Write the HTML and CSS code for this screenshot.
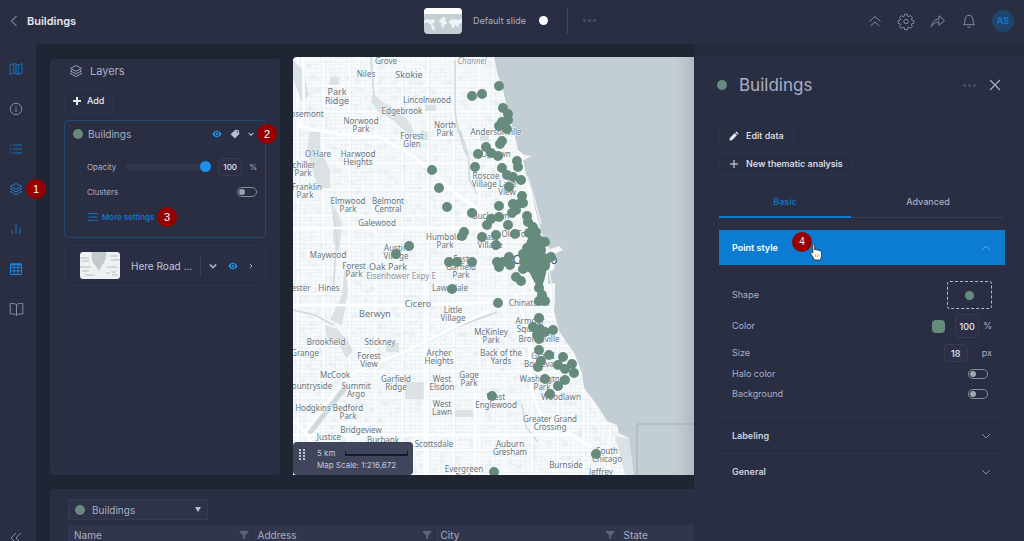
FILE: index.html
```html
<!DOCTYPE html>
<html lang="en">
<head>
<meta charset="utf-8">
<meta name="viewport" content="width=device-width, initial-scale=1">
<title>Buildings</title>
<link rel="stylesheet" href="styles.css">
</head>
<body>
<svg class="defs" width="0" height="0" aria-hidden="true">
  <symbol id="eye" viewBox="0 0 12 10"><path fill="currentColor" fill-rule="evenodd" d="M6 1C3.300 1 1.300 2.700.4 5 1.300 7.300 3.300 9 6 9s4.700-1.700 5.600-4C10.700 2.700 8.700 1 6 1zm0 1.300a2.700 2.700 0 1 1 0 5.400 2.700 2.700 0 0 1 0-5.400z"/><circle cx="6" cy="5" r="1.500" fill="currentColor"/></symbol>
  <symbol id="layers" viewBox="0 0 16 16"><path d="M8 1.700 14.200 5 8 8.300 1.800 5zM3.200 7.300 1.800 8 8 11.300 14.200 8l-1.400-.7M3.200 10.300 1.800 11 8 14.300l6.200-3.300-1.400-.7"/></symbol>
  <symbol id="filter" viewBox="0 0 10 10"><path fill="currentColor" d="M.8 1h8.400v1.200L6 5.400V9H4.200V5.400L.8 2.200z"/></symbol>
  <symbol id="chevron" viewBox="0 0 10 6"><path d="m1 1 4 4 4-4"/></symbol>
</svg>

<header class="topbar">
  <div class="topbar-left">
    <button class="icon-btn" aria-label="Back"><svg class="line" width="8" height="12" viewBox="0 0 8 12"><path d="M6.500 1 1.500 6l5 5"/></svg></button>
    <h1>Buildings</h1>
  </div>
  <div class="slides">
    <svg class="slide-thumb" viewBox="0 0 38 26" aria-hidden="true">
      <rect width="38" height="26" fill="#c3cfd3"/><rect width="38" height="6" fill="#fff"/>
      <g fill="#eef4f5"><path d="M0 13l3-2 4 1 3-1 1 3-3 2 3 3-1 4-2-2-1-4-4-3-3 1zM16 12l3-3 3 1-1 3 2 1-1 3-2-1v4l-2-1-1-4-2-1zM25 13l4-2 5 1 4-1v4l-3 1-1 4-2-3-2 1v3l-2-2-1-3-2-1z"/></g>
    </svg>
    <span class="slide-name">Default slide</span>
    <span class="slide-dot"></span>
    <button class="dots-btn slide-more" aria-label="More slides"><i></i><i></i><i></i></button>
  </div>
  <div class="topbar-right">
    <button class="icon-btn" aria-label="Collapse"><svg class="line" width="14" height="14" viewBox="0 0 14 14"><path d="m1.500 7.500 5.500-5 5.500 5M2.500 12 7 8l4.500 4"/></svg></button>
    <button class="icon-btn" aria-label="Settings"><svg class="line" width="16" height="16" viewBox="0 0 16 16"><path d="M6.700 1.200h2.600l.4 1.900 1.200.5 1.700-1 1.800 1.800-1 1.700.5 1.100 1.900.5v2.600l-1.900.4-.5 1.200 1 1.600-1.800 1.900-1.700-1.100-1.200.5-.4 2H6.700l-.4-2-1.200-.5-1.700 1.100-1.800-1.900 1-1.600-.5-1.200-1.900-.4V7.700l1.900-.5.500-1.100-1-1.700 1.800-1.800 1.700 1 1.200-.5z"/><circle cx="8" cy="8.500" r="2.200"/></svg></button>
    <button class="icon-btn" aria-label="Share"><svg class="line" width="16" height="14" viewBox="0 0 16 14"><path d="M1.500 12.500C2 8 4.500 5.200 9 5.200V1.700l5.500 5L9 11.200V8C5.500 8 3.300 9.300 1.500 12.500z"/></svg></button>
    <button class="icon-btn" aria-label="Notifications"><svg class="line" width="14" height="16" viewBox="0 0 14 16"><path d="M1.500 11.700h11c-1.200-1.200-1.500-2.200-1.500-4.700C11 4 9.300 2.300 7 2.300S3 4 3 7c0 2.500-.3 3.500-1.500 4.700zM5.500 14.300h3"/></svg></button>
    <button class="avatar">AS</button>
  </div>
</header>

<div class="workspace">
  <nav class="rail" aria-label="Sections">
    <div class="rail-items">
      <a href="#map" class="on" aria-label="Map"><svg width="14" height="14" viewBox="0 0 14 14"><path d="m1 3 3.700-1.500 4.600 1.500L13 1.500V11l-3.700 1.500L4.700 11 1 12.500zM4.700 1.500V11M9.300 3v9.500M7 2.300v9.500"/></svg></a>
      <a href="#info" aria-label="Info"><svg width="14" height="14" viewBox="0 0 14 14"><circle cx="7" cy="7" r="5.700"/><path d="M7 6.200v4M7 3.800v1"/></svg></a>
      <a href="#legend" class="on" aria-label="Legend"><svg width="14" height="14" viewBox="0 0 14 14"><path d="M4 3h9M4 7h9M4 11h9M1 3h1.300M1 7h1.300M1 11h1.300"/></svg></a>
      <a href="#layers" class="on bright" aria-label="Layers"><svg width="14" height="14"><use href="#layers"/></svg><b class="step step-1">1</b></a>
      <a href="#charts" class="on" aria-label="Charts"><svg width="14" height="14" viewBox="0 0 14 14"><path d="M3 12V8M7 12V2M11 12V6"/></svg></a>
      <a href="#table" class="on bright" aria-label="Table"><svg width="14" height="14" viewBox="0 0 14 14"><path d="M1.500 2h11v10.500h-11zM1.500 5.500h11M1.500 9h11M5 3v9.500M9 3v9.500"/><path d="M1.500 2.500h11" stroke-width="2"/></svg></a>
      <a href="#docs" aria-label="Docs"><svg width="15" height="14" viewBox="0 0 15 14"><path d="M7.500 2.700C6 1.500 3.500 1.200 1.200 1.500V12c2.300-.3 4.800 0 6.300 1.200 1.500-1.200 4-1.500 6.300-1.200V1.500c-2.300-.3-4.800 0-6.300 1.200zv10.500"/></svg></a>
    </div>
    <button class="icon-btn rail-fold" aria-label="Fold"><svg class="line" width="12" height="12" viewBox="0 0 12 12"><path d="M6 1 1 6l5 5M11 1 6 6l5 5"/></svg></button>
  </nav>

  <main class="stage">
    <div class="upper">
      <section class="layers">
        <h2><svg class="line" width="14" height="14"><use href="#layers"/></svg>Layers</h2>
        <button class="outline-btn"><svg class="line strong" width="8" height="8" viewBox="0 0 8 8"><path d="M4 0v8M0 4h8"/></svg>Add</button>
        <article class="card active">
          <div class="card-head">
            <span class="dot"></span><h3>Buildings</h3>
            <button class="icon-btn blue" aria-label="Visibility"><svg width="10" height="8"><use href="#eye"/></svg></button>
            <button class="icon-btn" aria-label="Label"><svg width="10" height="10" viewBox="0 0 10 10"><path fill="#b9bfd4" d="M5.300.8 9 1.200 9.300 5 4.800 9.400.7 5.300z"/><circle cx="7.300" cy="2.800" r=".7" fill="#2a2e42"/></svg></button>
            <button class="icon-btn" aria-label="Collapse layer"><svg class="line strong" width="6" height="4"><use href="#chevron"/></svg></button>
            <b class="step step-2">2</b>
          </div>
          <div class="field">
            <label for="opacity">Opacity</label>
            <input type="range" id="opacity" value="100">
            <input type="text" class="num" value="100" aria-label="Opacity percent"><span class="unit">%</span>
          </div>
          <div class="field split"><label for="clusters">Clusters</label><input type="checkbox" class="switch" id="clusters"></div>
          <a href="#settings" class="more"><svg width="10" height="10" viewBox="0 0 10 10"><path d="M0 1.500h10M0 5h10M0 8.500h10M3 .5v2M7 4v2M3 7.500v2"/></svg>More settings<b class="step step-3">3</b></a>
        </article>
        <article class="card base">
          <svg class="base-thumb" viewBox="0 0 40 27" aria-hidden="true"><rect width="40" height="27" fill="#eef1f1"/><path fill="#c3cacd" d="M12 0h14c1 6-1 10-4 13l-3 6-4-6c-3-3-4-7-3-13z"/><path d="M0 6h9M1 9h8M0 15h11M2 19h7M5 23h10M30 4h8M31 8h9M27 15h10M26 21h4M32 23h6M31 20h5" stroke="#aab3b6" stroke-width=".8"/></svg>
          <h3>Here Road ...</h3>
          <button class="icon-btn divided" aria-label="Options"><svg class="line strong" width="8" height="6"><use href="#chevron"/></svg></button>
          <button class="icon-btn blue" aria-label="Visibility"><svg width="10" height="8"><use href="#eye"/></svg></button>
          <button class="icon-btn" aria-label="Open"><svg class="line" width="4" height="6" viewBox="0 0 4 6"><path d="m.8.800 2.200 2.200L.8 5.200"/></svg></button>
        </article>
      </section>

      <section class="map" aria-label="Map">
        <svg class="map-canvas" viewBox="293 57 401 418" preserveAspectRatio="xMinYMin slice">
          <defs>
            <pattern id="blocks" width="5" height="4" patternUnits="userSpaceOnUse"><path d="M0 .5h5M.5 0v4" stroke="#ebf0f3" stroke-width=".6"/></pattern>
            <pattern id="avenues" width="26" height="26" patternUnits="userSpaceOnUse"><path d="M0 8h26M12 0v26" stroke="#fff" stroke-width="1.500"/><path d="M0 9.300h26M13.300 0v26" stroke="#e6ecef" stroke-width=".6"/></pattern>
            <filter id="speckle" x="0" y="0" width="1" height="1"><feTurbulence type="fractalNoise" baseFrequency=".13 .16" numOctaves="3" seed="8"/><feColorMatrix values="0 0 0 0 .77  0 0 0 0 .82  0 0 0 0 .84  3.600 0 0 0 -2"/></filter>
            <linearGradient id="shade"><stop offset="0" stop-color="#8e979d" stop-opacity="0"/><stop offset="1" stop-color="#8e979d" stop-opacity=".35"/></linearGradient>
          </defs>
          <rect x="293" y="57" width="401" height="418" fill="#f6fafc"/>
          <rect x="293" y="57" width="401" height="418" fill="url(#blocks)"/>
          <rect x="293" y="57" width="401" height="418" filter="url(#speckle)" opacity=".9"/>
          <rect x="293" y="57" width="401" height="418" fill="url(#avenues)"/>
          <g fill="#dae2e5">
            <path d="M309 132h11v17l10 21v18h-12l-5-16-6-22zM373 93l8 8 12 8 14 10 7 12-4 5-16-15-16-10-7-9zM405 382h19v17h-19zM325 325l12 4 11 12 5 10-7 7-6-12-13-8zM345 262l3 28-6 35-12-5 12-25zM334 205l8 18-3 30-6-12zM425 105h11v6h-11zM421 130l7 2v8h-8zM480 134h9v7h-9zM386 343h13v9h-13zM455 410h18v7h-18zM615 436l17 3 5 36h-12zM330 77h9v8h-9zM293 60l10 10 6 25-7 8-9-25z"/>
          </g>
          <g fill="none" stroke="#cfd8dc" stroke-width="1.500">
            <path d="M455 60v50l2 15 7 24 5 10v20l8 15M293 310l22 5 18 10M332 205l5 35-4 50M460 130l8 25M371 57l3 40M522 405l4 22 12 15"/>
            <path d="M348 376l49-20 60-29 40-15"/>
            <path d="M309 434l39-50" stroke-width="5"/>
          </g>
          <g fill="none" stroke="#fff" stroke-width="2.500">
            <path d="M303 57l1 50-4 20 40 7 40 3 35 20 45 40 45 30 35 20M293 228h225M293 305h120l100-3M305 432l42-56 53-22 90-44M293 420l15 15 15 40M425 260v215M516 295l13 40 2 55 10 25 50 32M548 275l6 30 12 28 14 35M505 110l18 50 15 65M293 435h280M475 380v95"/>
          </g>
          <path fill="#c3cdd4" d="M694 57H494l3 15 6 18 5 22 6 21 4 17 6 5 8 1-9 4 3 15 5 15 3 15 5 18 4 15 7 11 9-3 4 4-7 3-2 17-6 2v12l7-1v15l-1 13 5 20 15 22 8 20 2 15 13 17 10 16 10 4 2 8 10 5 5 37h60z"/>
          <path d="M541 224l-9-33-5-15M549 270l4 24v13" fill="none" stroke="#edf2f4" stroke-width="1.500"/>
          <path d="M694 424h-57v51" fill="none" stroke="#a5afb6"/>
          <rect x="676" y="57" width="18" height="418" fill="url(#shade)"/>
          <g class="place">
            <text x="386" y="64">Grove</text><text x="366" y="77">Niles</text><text x="427" y="103">Lincolnwood</text><text x="402" y="114">Edgebrook</text>
            <text x="307" y="117">osemont</text><text x="361" y="124">Norwood<tspan x="361" dy="8">Park</tspan></text><text x="412" y="139">Forest<tspan x="412" dy="8">Glen</tspan></text>
            <text x="445" y="128">North<tspan x="445" dy="8">Park</tspan></text><text x="496" y="135">Andersonville</text><text x="318" y="157">O'Hare</text>
            <text x="358" y="157">Harwood<tspan x="358" dy="8">Heights</tspan></text><text x="304" y="168">chiller<tspan x="303" dy="8">Park</tspan></text><text x="307" y="190">Franklin<tspan x="305" dy="8">Park</tspan></text>
            <text x="348" y="204">Elmwood<tspan x="348" dy="8">Park</tspan></text><text x="388" y="204">Belmont<tspan x="388" dy="8">Central</tspan></text><text x="377" y="226">Galewood</text>
            <text x="445" y="240">Humboldt<tspan x="445" dy="8">Park</tspan></text><text x="396" y="251">Austin<tspan x="396" dy="8">Village</tspan></text><text x="328" y="258">Maywood</text>
            <text x="496" y="157">Uptown</text><text x="486" y="179">Roscoe</text><text x="494" y="187">Village Lake</text><text x="507" y="195">View</text><text x="491" y="219">Bucktown</text>
            <text x="519" y="237">Old Town</text><text x="490" y="240">East<tspan x="490" dy="8">Village</tspan></text><text x="461" y="262">East<tspan x="461" dy="8">Garfield</tspan><tspan x="461" dy="8">Park</tspan></text>
            <text x="354" y="269">Forest<tspan x="354" dy="8">Park</tspan></text><text x="301" y="291">ester</text><text x="329" y="291">Hines</text><text x="450" y="291">Lawndale</text>
            <text x="453" y="313">Little<tspan x="453" dy="8">Village</tspan></text><text x="529" y="306">Chinatown</text><text x="491" y="335">McKinley<tspan x="491" dy="8">Park</tspan></text>
            <text x="530" y="324">Armour<tspan x="530" dy="8">Square</tspan></text><text x="539" y="342">Bronzeville</text><text x="326" y="345">Brookfield</text><text x="380" y="345">Stickney</text>
            <text x="305" y="356">Grange</text><text x="369" y="359">Forest<tspan x="369" dy="8">View</tspan></text><text x="439" y="356">Archer<tspan x="439" dy="8">Heights</tspan></text><text x="501" y="356">Back of the<tspan x="501" dy="8">Yards</tspan></text>
            <text x="543" y="359">Grand<tspan x="543" dy="8">Boulevard</tspan></text><text x="335" y="378">McCook</text><text x="312" y="389">ountryside</text><text x="356" y="389">Summit<tspan x="356" dy="8">Argo</tspan></text>
            <text x="396" y="382">Garfield<tspan x="396" dy="8">Ridge</tspan></text><text x="442" y="382">West<tspan x="442" dy="8">Elsdon</tspan></text><text x="469" y="378">Gage<tspan x="469" dy="8">Park</tspan></text>
            <text x="542" y="382">Washington<tspan x="542" dy="8">Park</tspan></text><text x="561" y="400">Woodlawn</text><text x="496" y="400">West<tspan x="496" dy="8">Englewood</tspan></text>
            <text x="442" y="407">West<tspan x="442" dy="8">Lawn</tspan></text><text x="313" y="411">Hodgkins</text><text x="348" y="411">Bedford<tspan x="348" dy="8">Park</tspan></text><text x="550" y="422">Greater Grand<tspan x="550" dy="8">Crossing</tspan></text>
            <text x="361" y="433">Bridgeview</text><text x="329" y="440">Justice</text><text x="383" y="443">Burbank</text><text x="434" y="447">Scottsdale</text><text x="510" y="447">Auburn<tspan x="510" dy="8">Gresham</tspan></text>
            <text x="607" y="454">South<tspan x="607" dy="8">Chicago</tspan></text><text x="566" y="468">Burnside</text><text x="464" y="472">Evergreen<tspan x="464" dy="8">Park</tspan></text><text x="601" y="475">Jeffrey</text>
          </g>
          <g class="place faint"><text x="472" y="64" font-style="italic">Channel</text><text x="401" y="279">Eisenhower Expy E</text></g>
          <g class="place town">
            <text x="409" y="78">Skokie</text><text x="337" y="95">Park<tspan x="337" dy="9">Ridge</tspan></text><text x="388" y="270">Oak Park</text><text x="418" y="307">Cicero</text><text x="375" y="317">Berwyn</text>
          </g>
          <text class="place city" x="535" y="264">Chicago</text>
          <path fill="#668b7d" stroke="#668b7d" stroke-width="3" stroke-linejoin="round" d="M533 230l6 6 7 6-5 6 1 8 9 1-6 13-2 9-3 9-4-6-6-12-8-8-2-8 6-7z"/>
          <path class="points" d="M499 86h0M472 96h0M482 94h0M503 108h0M508 114h0M508 120h0M502 122h0M499 126h0M507 129h0M502 141h0M500 144h0M486 147h0M478 154h0M491 153h0M498 156h0M517 161h0M518 167h0M475 167h0M502 168h0M507 175h0M513 177h0M521 180h0M509 187h0M522 196h0M523 203h0M519 204h0M513 204h0M499 206h0M516 210h0M512 213h0M472 213h0M499 217h0M491 219h0M487 225h0M527 216h0M528 222h0M508 225h0M533 227h0M536 232h0M529 233h0M515 234h0M496 235h0M496 245h0M482 237h0M464 232h0M462 236h0M545 242h0M532 244h0M551 257h0M509 257h0M472 262h0M497 262h0M503 262h0M510 265h0M499 267h0M432 170h0M439 188h0M447 207h0M409 246h0M396 254h0M449 262h0M457 262h0M452 289h0M498 303h0M516 277h0M521 281h0M539 288h0M542 295h0M539 301h0M545 301h0M539 318h0M533 327h0M540 329h0M545 332h0M537 335h0M539 339h0M553 330h0M539 350h0M549 355h0M541 361h0M538 367h0M563 357h0M572 364h0M558 365h0M565 369h0M574 373h0M545 379h0M565 380h0M558 386h0M550 394h0M492 396h0M596 454h0M494 472h0M536 240h0M527 248h0M523 254h0M530 258h0M540 262h0M531 268h0M545 266h0M537 276h0M541 250h0M524 262h0M544 258h0M541 272h0M523 269h0"/>
        </svg>
        <div class="scale">
          <svg width="6" height="11" viewBox="0 0 6 11" fill="#c2c7da" aria-hidden="true"><path d="M0 0h2v2H0zM4 0h2v2H4zM0 3h2v2H0zM4 3h2v2H4zM0 6h2v2H0zM4 6h2v2H4zM0 9h2v2H0zM4 9h2v2H4z"/></svg>
          <div class="scale-text"><p><span>5 km</span><span class="scale-bar"></span></p><p>Map Scale: 1:216,672</p></div>
        </div>
      </section>
    </div>

    <section class="data">
      <div class="picker"><span class="dot"></span>
        <select aria-label="Layer"><option>Buildings</option></select>
        <svg class="caret" width="6" height="5" viewBox="0 0 6 5" aria-hidden="true"><path fill="#b9bfd4" d="M0 0h6L3 5z"/></svg>
      </div>
      <table>
        <thead><tr>
          <th><span>Name<svg width="10" height="10"><use href="#filter"/></svg></span></th>
          <th><span>Address<svg width="10" height="10"><use href="#filter"/></svg></span></th>
          <th><span>City<svg width="10" height="10"><use href="#filter"/></svg></span></th>
          <th class="last"><span>State</span></th>
        </tr></thead>
      </table>
    </section>
  </main>

  <aside class="drawer">
    <div class="drawer-head">
      <span class="dot"></span><h2>Buildings</h2>
      <button class="dots-btn" aria-label="More"><i></i><i></i><i></i></button>
      <button class="icon-btn" aria-label="Close"><svg class="line pale" width="12" height="12" viewBox="0 0 12 12"><path d="m1 1 10 10M11 1 1 11"/></svg></button>
    </div>
    <div class="actions">
      <button class="outline-btn"><svg width="10" height="10" viewBox="0 0 10 10"><path fill="#e6e8f0" d="M7.400.4 9.600 2.600 8.600 3.600 6.400 1.400zM5.700 2.100 7.900 4.300 3 9.200.4 9.600.8 7z"/></svg>Edit data</button>
      <button class="outline-btn"><svg class="line" width="10" height="10" viewBox="0 0 10 10"><path d="M5 1v8M1 5h8"/></svg>New thematic analysis</button>
    </div>
    <div class="tabs" role="tablist">
      <button role="tab" aria-selected="true">Basic</button>
      <button role="tab" aria-selected="false">Advanced</button>
    </div>
    <button class="section-head open">Point style<svg class="line flip" width="10" height="6"><use href="#chevron"/></svg>
      <b class="step step-4">4</b>
      <svg class="hand" width="12" height="17" viewBox="0 0 12 17" aria-hidden="true"><path fill="#fff" stroke="#222" stroke-width=".8" d="M2.800 1.500C2.800.3 4.600.3 4.700 1.500V6c.2-.9 1.700-.8 1.800.2.3-.8 1.700-.6 1.800.4.400-.7 1.700-.4 1.900.6.500-.4 1.300 0 1.300.9v3.400c0 2-.8 3-1 4.500H4.200C3.800 13.500 2 12 .7 9.500.2 8.200 1.700 7.700 2.800 9.200z"/><path d="M5.500 10v3M7.300 10v3M9.100 10v3" stroke="#999" stroke-width=".6"/></svg>
    </button>
    <div class="props">
      <div class="prop tall"><span>Shape</span><button class="shape" aria-label="Shape"><span class="dot small"></span></button></div>
      <div class="prop mid"><label for="color">Color</label><div class="prop-value"><button class="swatch" aria-label="Pick color"></button><input type="text" class="num" id="color" value="100"><span class="unit">%</span></div></div>
      <div class="prop"><label for="size">Size</label><div class="prop-value size"><input type="text" class="num" id="size" value="18"><span class="unit">px</span></div></div>
      <div class="prop low"><label for="halo">Halo color</label><input type="checkbox" class="switch" id="halo"></div>
      <div class="prop low"><label for="bg">Background</label><input type="checkbox" class="switch" id="bg"></div>
    </div>
    <button class="section-head">Labeling<svg class="line" width="10" height="6"><use href="#chevron"/></svg></button>
    <button class="section-head">General<svg class="line" width="10" height="6"><use href="#chevron"/></svg></button>
  </aside>
</div>
</body>
</html>
```
FILE: styles.css
```css
:root {
  --bg: #202534;
  --panel: #2a2e42;
  --raised: #31364c;
  --text: #a9aec6;
  --muted: #858aa5;
  --bright: #e6e8f0;
  --blue: #0c7cd2;
  --azure: #1b8fec;
  --green: #668b7d;
}
* { box-sizing: border-box; }
body {
  margin: 0;
  height: 100vh;
  display: flex;
  flex-direction: column;
  overflow: hidden;
  background: var(--bg);
  color: var(--text);
  font: 9px/12px Inter, "Open Sans", sans-serif;
}
h1, h2, h3, p { margin: 0; font-weight: 400; }
button, input, select { font: inherit; color: inherit; margin: 0; padding: 0; border: 0; background: none; }
a { color: inherit; text-decoration: none; }
svg { display: block; flex: none; }
.defs { position: absolute; }
.line { fill: none; stroke: currentColor; stroke-width: 1; overflow: visible; }
.line.strong { stroke-width: 2; }
.icon-btn { display: flex; align-items: center; justify-content: center; color: var(--text); }
.icon-btn.blue { color: var(--azure); }
.dot { flex: none; width: 10px; height: 10px; border-radius: 50%; background: var(--green); }
.dot.small { width: 9px; height: 9px; }
.dots-btn { display: flex; gap: 2px; }
.dots-btn i { width: 3px; height: 3px; border-radius: 50%; background: #4b5068; }
.step {
  position: absolute;
  width: 20px; height: 20px;
  border-radius: 50%;
  background: #960000;
  color: #fff;
  font: 11px/20px "Liberation Sans", Arial, sans-serif;
  text-align: center;
}

.topbar {
  flex: none;
  height: 44px;
  padding: 0 10px 3px;
  display: grid;
  grid-template-columns: 1fr auto 1fr;
  align-items: center;
  background: var(--panel);
}
.topbar-left, .topbar-right, .slides { display: flex; align-items: center; }
.topbar-left { gap: 9px; }
.topbar h1 { font-size: 11px; font-weight: 600; color: var(--bright); }
.slides { gap: 11px; padding-right: 4px; }
.slide-thumb { width: 38px; height: 26px; border-radius: 4px; }
.slide-dot { width: 9px; height: 9px; border-radius: 50%; background: #fff; margin: 0 8px 0 2px; }
.slide-more { height: 26px; padding-left: 15px; border-left: 1px solid #41465b; align-items: center; }
.topbar-right { justify-content: flex-end; gap: 16px; }
.topbar-right .icon-btn { color: var(--muted); }
.avatar { width: 22px; height: 22px; border-radius: 50%; background: #20456d; color: #0d7bd6; font-weight: 600; }

.workspace { flex: 1; min-height: 0; display: flex; }
.rail {
  flex: none;
  width: 36px;
  padding: 13px 4px 0 0;
  display: flex;
  flex-direction: column;
  justify-content: space-between;
  background: var(--panel);
  color: var(--muted);
}
.rail-items { display: flex; flex-direction: column; gap: 16px; }
.rail a { position: relative; height: 24px; display: flex; align-items: center; justify-content: center; }
.rail a svg { fill: none; stroke: currentColor; stroke-width: 1; }
.rail .on { color: #1673bd; }
.rail .bright { color: #1b83da; }
.rail-fold { height: 12px; color: var(--muted); margin-bottom: -3px; }
.step-1 { left: 26px; top: 2px; }

.stage { flex: 1; min-width: 0; display: flex; flex-direction: column; padding: 13px 0 0 14px; gap: 14px; }
.upper { flex: 1; min-height: 0; display: flex; gap: 13px; }
.layers { flex: none; width: 230px; margin-top: 2px; padding: 5px 14px; border-radius: 4px; background: var(--panel); }
.layers h2 { display: flex; align-items: center; gap: 7px; padding-left: 5px; font-size: 11px; line-height: 14px; }
.outline-btn {
  display: flex; align-items: center; gap: 6px;
  height: 24px; padding: 0 8px;
  border: 1px solid #303449; border-radius: 4px;
  color: var(--bright); font-weight: 500;
}
.layers .outline-btn { margin-top: 11px; }
.card { border: 1px solid #303449; border-radius: 4px; margin-top: 7px; }
.card.active { border-color: #204a72; padding: 5px 8px 14px; }
.card h3 { flex: 1; font-size: 10px; white-space: nowrap; }
.card-head { position: relative; display: flex; align-items: center; gap: 8px; height: 16px; padding-right: 3px; }
.card-head .dot { margin-right: -3px; }
.step-2 { left: 184px; top: -2px; }
.field { display: flex; align-items: center; height: 18px; margin: 16px 0 0 14px; font-size: 8px; }
.field.split { margin-top: 7px; justify-content: space-between; }
.field label { width: 38px; }
input[type=range] { appearance: none; flex: 1; min-width: 0; height: 12px; }
input[type=range]::-webkit-slider-runnable-track { height: 6px; border-radius: 3px; background: var(--raised); }
input[type=range]::-webkit-slider-thumb { appearance: none; width: 11px; height: 11px; margin-top: -3px; border-radius: 50%; background: var(--azure); }
.num { width: 24px; height: 18px; margin-left: 7px; border: 1px solid #363b52; border-radius: 4px; background: #2c3046; color: var(--bright); font-weight: 500; text-align: center; }
.unit { margin-left: 7px; }
.switch { appearance: none; flex: none; width: 20px; height: 10px; border: 1px solid var(--muted); border-radius: 5px; display: flex; align-items: center; padding: 0 1px; }
.switch::before { content: ""; width: 6px; height: 6px; border-radius: 50%; background: #a1a5ab; }
.more { position: relative; display: flex; width: max-content; align-items: center; gap: 4px; margin: 10px 0 0 15px; font-size: 8px; font-weight: 500; color: var(--blue); }
.more svg { stroke: #1a69ab; stroke-width: 1; }
.step-3 { left: 69px; top: -4px; }
.card.base { display: flex; align-items: center; gap: 11px; height: 41px; padding: 0 12px 0 15px; color: #c2c7da; }
.base-thumb { width: 40px; height: 27px; border-radius: 3px; }
.card.base h3 { flex: 1; min-width: 0; }
.divided { height: 20px; padding-left: 8px; border-left: 1px solid #3a3f54; }

.map { position: relative; flex: 1; min-width: 0; overflow: hidden; border-radius: 4px 0 0 0; }
.map-canvas { width: 100%; height: 100%; }
.place { font: 8px "Noto Sans", sans-serif; text-anchor: middle; fill: #68737b; stroke: #f8fbfc; stroke-width: 1px; paint-order: stroke; }
.faint { fill: #89939a; }
.town { font-size: 9px; }
.city { font-size: 12px; fill: #45556a; stroke: none; }
.points { fill: none; stroke: var(--green); stroke-width: 10; stroke-linecap: round; }
.scale { position: absolute; left: 0; bottom: 0; width: 120px; height: 33px; display: flex; gap: 12px; padding: 5px 5px 3px 6px; border-radius: 4px; background: #363b53f2; font-size: 8px; color: #c2c7da; white-space: nowrap; }
.scale > svg { margin-top: 2px; }
.scale-text { flex: 1; }
.scale p { display: flex; align-items: center; gap: 9px; }
.scale-bar { flex: 1; height: 5px; border: solid #171a28; border-width: 0 1px 2px; }

.data { flex: none; height: 52px; overflow: hidden; padding: 10px 0 0 18px; background: var(--panel); border-radius: 4px 0 0 0; }
.picker { position: relative; display: flex; align-items: center; width: 140px; height: 21px; padding-left: 6px; border: 1px solid #363b51; background: #2e3348; font-size: 10px; }
.picker select { appearance: none; flex: 1; height: 100%; padding-left: 7px; }
.caret { position: absolute; right: 6px; }
table { width: 100%; margin-top: 5px; border-collapse: collapse; table-layout: fixed; background: var(--raised); font-size: 10px; }
th { width: 183px; padding: 4px 2px 4px 6px; border-right: 1px solid #292d41; font-weight: 400; text-align: left; }
th.last { width: auto; border: 0; }
th span { display: flex; align-items: center; justify-content: space-between; }
th svg { color: #5e637c; }

.drawer { flex: none; width: 330px; padding: 31px 19px 0 25px; background: linear-gradient(#23283a, var(--panel) 18px); }
.drawer-head { display: flex; align-items: center; height: 20px; padding-right: 4px; }
.drawer-head .dot { margin-left: -2px; }
.drawer h2 { flex: 1; padding-left: 12px; font-size: 17px; line-height: 20px; }
.drawer-head .dots-btn { margin-right: 13px; }
.pale { stroke-width: 1.2; }
.actions { display: flex; flex-direction: column; align-items: flex-start; gap: 4px; margin-top: 29px; }
.actions .outline-btn { gap: 7px; padding: 0 9px; }
.tabs { display: grid; grid-template-columns: 132px 1fr; margin-top: 11px; border-bottom: 1px solid #383d52; }
.tabs button { height: 31px; margin-bottom: -1px; border-bottom: 2px solid transparent; font-weight: 500; }
.tabs [aria-selected=true] { color: var(--blue); border-color: var(--blue); }
.section-head { position: relative; display: flex; align-items: center; justify-content: space-between; width: 100%; height: 36px; padding: 0 14px 0 13px; border-top: 1px solid #303449; color: #cdd1e0; font-weight: 600; text-align: left; }
.section-head > .line { color: var(--muted); }
.section-head.open { margin-top: 12px; height: 35px; background: var(--blue); border: 0; color: #fff; }
.section-head.open > .line { color: #5eaae4; }
.flip { transform: rotate(180deg); }
.step-4 { left: 73px; top: 2px; font-size: 10px; }
.hand { position: absolute; left: 91px; top: 14px; }
.props { padding: 15px 13px 13px; }
.prop { display: flex; align-items: center; justify-content: space-between; height: 22px; }
.prop.tall { height: 30px; }
.prop.mid { height: 32px; }
.prop.low { height: 20px; padding-right: 4px; }
.shape { width: 45px; height: 28px; display: flex; align-items: center; justify-content: center; border: 1px dashed #b4b9cc; border-radius: 3px; }
.prop-value { display: flex; align-items: center; }
.swatch { width: 13px; height: 13px; border-radius: 4px; background: var(--green); }
.prop .num { height: 24px; margin-left: 10px; }
.prop .unit { margin-left: 4px; }
.prop .size .num { height: 18px; }
.prop .size .unit { margin-left: 14px; }
```
